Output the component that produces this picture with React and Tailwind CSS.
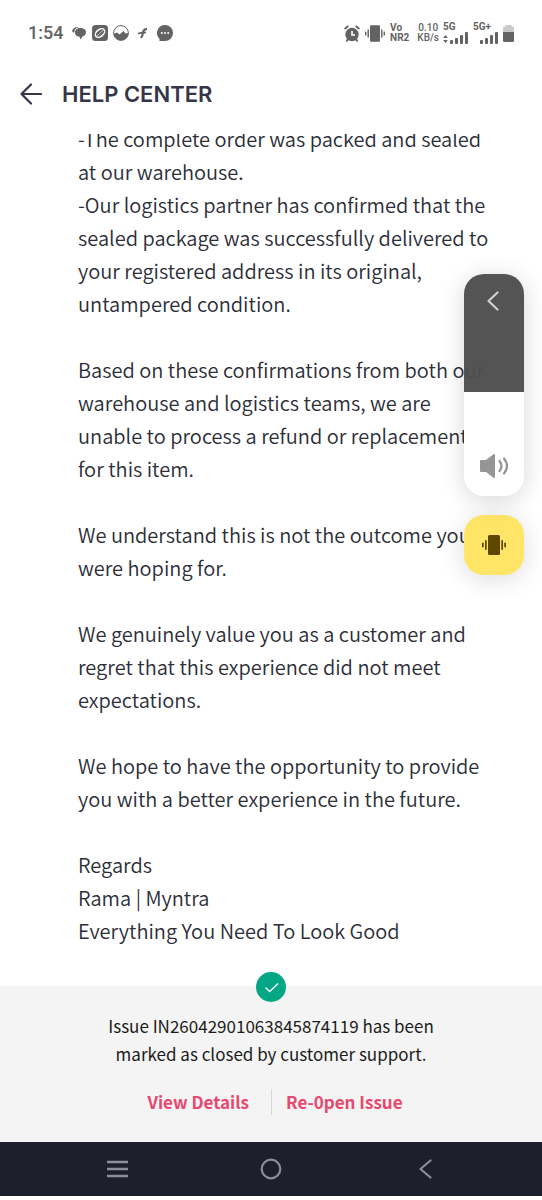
import { useState } from 'react';

const paragraphs = [
    [
        '-The complete order was packed and sealed at our warehouse.',
        '-Our logistics partner has confirmed that the sealed package was successfully delivered to your registered address in its original, untampered condition.',
    ],
    ['Based on these confirmations from both our warehouse and logistics teams, we are unable to process a refund or replacement for this item.'],
    ['We understand this is not the outcome you were hoping for.'],
    ['We genuinely value you as a customer and regret that this experience did not meet expectations.'],
    ['We hope to have the opportunity to provide you with a better experience in the future.'],
    ['Regards', 'Rama | Myntra', 'Everything You Need To Look Good'],
];

function SignalBars({ roaming }) {
    return (
        <svg className="w-[26px] h-3" viewBox="0 0 26 12" fill="currentColor">
            {roaming && <path d="M2.500 3 4.800 6H.2zM2.500 11 .2 8h4.600z" />}
            <rect x="7" y="8" width="3" height="4" rx="1" />
            <rect x="12" y="6" width="3" height="6" rx="1" />
            <rect x="17" y="3" width="3" height="9" rx="1" />
            <rect x="22" y="0" width="3" height="12" rx="1" />
        </svg>
    );
}

function VibrateIcon({ className }) {
    return (
        <svg className={className} viewBox="0 0 24 20" fill="currentColor">
            <rect x="6" y="0" width="12" height="20" rx="1.5" />
            <rect x="3" y="5" width="1.7" height="10" rx="0.8" />
            <rect x="19.3" y="5" width="1.7" height="10" rx="0.8" />
            <rect x="0" y="7.5" width="1.7" height="5" rx="0.8" />
            <rect x="22.3" y="7.5" width="1.7" height="5" rx="0.8" />
        </svg>
    );
}

function StatusBar() {
    return (
        <div className="flex items-center justify-between h-[66px] pl-7 pr-7 text-[#636363] font-['Roboto',sans-serif]">
            <div className="flex items-center">
                <span className="text-lg font-medium">1:54</span>
                <svg className="w-[14px] h-[14px] ml-[9px]" viewBox="0 0 14 14" fill="currentColor">
                    <path d="M.3 5C.3 2.700 2.500 1 6 1h3c-4 0-6.500 2-6.500 4.500v1C1 6.500.3 6 .3 5z" />
                    <path d="M8.300 2C11.500 2 14 3.600 14 6.200S11.800 10 10.500 10.500L8.500 13.500 7.500 10.700C4.500 10.600 3 9 3 6.500S5 2 8.300 2z" />
                </svg>
                <svg className="w-4 h-4 ml-[6px]" viewBox="0 0 16 16">
                    <rect width="16" height="16" rx="3.500" fill="currentColor" />
                    <ellipse cx="8" cy="8" rx="6" ry="4.200" transform="rotate(-40 8 8)" fill="#fff" />
                    <ellipse cx="8" cy="8" rx="4.800" ry="2.600" transform="rotate(-40 8 8)" fill="currentColor" />
                    <path d="M3.500 11.500C7 11 9 5.500 12.500 4.500" fill="none" stroke="#fff" strokeWidth=".6" />
                </svg>
                <svg className="w-4 h-4 ml-[5px]" viewBox="0 0 16 16">
                    <circle cx="8" cy="8" r="7.400" fill="none" stroke="currentColor" strokeWidth="1" />
                    <path d="M.6 9 4 7.500 6.500 9.500 10.500 6l2 2.500 3-.6A7.500 7.500 0 0 1 .6 9z" fill="currentColor" />
                </svg>
                <svg className="w-[10px] h-3 ml-[9px]" viewBox="0 0 10 12" fill="none" stroke="currentColor">
                    <path d="M2.500 10.500c2 0 1.800-2 2.300-4.500S6 2 9 2.200" strokeWidth="2.200" />
                    <path d="M0 6.500c3-.8 5-.8 8-1" strokeWidth="1.600" />
                </svg>
                <svg className="w-4 h-4 ml-[9px]" viewBox="0 0 16 16">
                    <path d="M8 0a8 8 0 1 1 0 16H2.500v-2.200A8 8 0 0 1 8 0z" fill="currentColor" />
                    <circle cx="4.800" cy="8" r="1" fill="#fff" />
                    <circle cx="8" cy="8" r="1" fill="#fff" />
                    <circle cx="11.200" cy="8" r="1" fill="#fff" />
                </svg>
            </div>
            <div className="flex items-center text-[10px] leading-[10px] font-bold">
                <svg className="w-4 h-[17px]" viewBox="0 0 16 17">
                    <circle cx="8" cy="9.500" r="6.700" fill="currentColor" />
                    <path d="m.6 4 3.600-3M15.400 4 11.800 1M4 14l-1.500 2.500M12 14l1.500 2.500" stroke="currentColor" strokeWidth="2" />
                    <path d="M8 6v4h3" fill="none" stroke="#fff" strokeWidth="1.600" />
                </svg>
                <VibrateIcon className="w-5 h-[17px] ml-[5px]" />
                <span className="ml-[5px]">Vo<br />NR2</span>
                <span className="ml-2 text-center font-medium">0.10<br />KB/s</span>
                <span className="ml-1 flex flex-col">5G<SignalBars roaming /></span>
                <span className="ml-1 flex flex-col">5G+<SignalBars /></span>
                <svg className="w-[11px] h-[17px] ml-1" viewBox="0 0 11 17" fill="currentColor">
                    <path d="M2.500 1.500V0h6v1.500h1Q11 1.500 11 3v4H0V3q0-1.500 1.500-1.500z" opacity=".35" />
                    <path d="M0 7h11v8.500Q11 17 9.500 17h-8Q0 17 0 15.500z" />
                </svg>
            </div>
        </div>
    );
}

function VolumePanel() {
    const [volume, setVolume] = useState(47);

    return (
        <div className="absolute right-[18px] top-[274px] flex flex-col gap-[19px]">
            <div className="relative flex flex-col w-[60px] h-[222px] rounded-[20px] overflow-hidden shadow-[0_4px_24px_rgba(0,0,0,0.16)]">
                <div className="flex-1 bg-[#4e4e4e]/97" />
                <div className="bg-white" style={{ height: `${volume}%` }} />
                <input
                    type="range"
                    aria-label="Volume"
                    value={volume}
                    onChange={(e) => setVolume(Number(e.target.value))}
                    className="absolute inset-0 w-full h-full appearance-none bg-transparent [writing-mode:vertical-lr] [direction:rtl] [&::-webkit-slider-thumb]:appearance-none"
                />
                <button aria-label="Sound settings" className="absolute left-[23px] top-[17px]">
                    <svg className="w-3 h-5" viewBox="0 0 12 20" fill="none" stroke="#d0d0d0" strokeWidth="2.200" strokeLinecap="round" strokeLinejoin="round">
                        <path d="M10.500 1.500 1.500 10l9 8.500" />
                    </svg>
                </button>
                <svg className="absolute left-4 bottom-[18px] w-7 h-6 pointer-events-none" viewBox="0 0 28 24">
                    <path d="M1 6h5l7.500-5.700q1.500-.6 1.500.7v22q0 1.300-1.500.7L6 18H1q-1 0-1-1V7q0-1 1-1z" fill="#959595" />
                    <path d="M19.500 7q4 5 0 10M24 4.500q6 7.500 0 15" fill="none" stroke="#959595" strokeWidth="2.200" strokeLinecap="round" />
                </svg>
            </div>
            <button aria-label="Vibrate" className="flex items-center justify-center w-[60px] h-[60px] rounded-[20px] bg-[#ffe566] text-[#5e4600] shadow-[0_4px_24px_rgba(0,0,0,0.14)]">
                <VibrateIcon className="w-6 h-5" />
            </button>
        </div>
    );
}

function IssueStatus() {
    return (
        <footer className="relative bg-[#f4f4f4] pt-[26px] pb-[27px] text-center text-[17px] leading-7 text-[#1c1c20]">
            <svg className="absolute left-1/2 -translate-x-1/2 -top-[14px] w-[30px] h-[30px]" viewBox="0 0 30 30">
                <circle cx="15" cy="15" r="15" fill="#03a685" />
                <path d="m9.500 15.500 4.200 4 8.300-8" fill="none" stroke="#fff" strokeWidth="1.300" />
            </svg>
            <p className="max-w-[360px] mx-auto">
                Issue IN26042901063845874119 has been marked as closed by customer support.
            </p>
            <div className="mt-[21px] grid grid-cols-2 leading-[26px] font-bold text-[#e8486f]">
                <div className="flex justify-end pr-[22px]">
                    <button>View Details</button>
                </div>
                <div className="flex pl-[14px] border-l border-[#d8d8da]">
                    <button>Re-0pen Issue</button>
                </div>
            </div>
        </footer>
    );
}

function NavBar() {
    return (
        <nav className="flex items-center justify-between h-[54px] mb-1 px-[105px] bg-[#1d202c] text-[#8c8e99]">
            <button aria-label="Recent apps" className="w-6 flex justify-center">
                <svg className="w-[21px] h-[18px]" viewBox="0 0 21 18" fill="none" stroke="currentColor" strokeWidth="2.400">
                    <path d="M0 2h21M0 9h21M0 16h21" />
                </svg>
            </button>
            <button aria-label="Home" className="w-6 flex justify-center">
                <svg className="w-[22px] h-[22px]" viewBox="0 0 22 22" fill="none" stroke="currentColor" strokeWidth="2.200">
                    <circle cx="11" cy="11" r="9.300" />
                </svg>
            </button>
            <button aria-label="Back" className="w-6 flex justify-center">
                <svg className="w-[13px] h-5" viewBox="0 0 13 20" fill="none" stroke="currentColor" strokeWidth="2.200" strokeLinecap="round" strokeLinejoin="round">
                    <path d="M11.500 1.500 1.500 10l10 8.500" />
                </svg>
            </button>
        </nav>
    );
}

function App() {
    return (
        <div className="relative min-h-screen flex flex-col bg-white font-['Noto_Sans_CJK_SC',sans-serif]">
            <StatusBar />
            <header className="flex items-center gap-5 h-[68px] pl-5 pb-3 text-[#353748]">
                <button aria-label="Go back">
                    <svg className="w-[22px] h-[22px]" viewBox="0 0 22 22" fill="none" stroke="currentColor" strokeWidth="2.200" strokeLinecap="round" strokeLinejoin="round">
                        <path d="M21 11H1.500M11 1.500 1.500 11l9.500 9.500" />
                    </svg>
                </button>
                <h1 className="text-[22px] font-semibold font-['Inter',sans-serif]">HELP CENTER</h1>
            </header>
            <main className="flex-1 overflow-hidden pl-[78px] pr-[52px]">
                {/* message is scrolled a little under the header */}
                <div className="-mt-3 flex flex-col gap-[33px] text-[20px] font-[350] leading-[33px] text-[#2c2e38]">
                    {paragraphs.map((lines, i) => (
                        <div key={i}>
                            {lines.map((line) => (
                                <p key={line}>{line}</p>
                            ))}
                        </div>
                    ))}
                </div>
            </main>
            <IssueStatus />
            <NavBar />
            <VolumePanel />
        </div>
    );
}

export default App;
